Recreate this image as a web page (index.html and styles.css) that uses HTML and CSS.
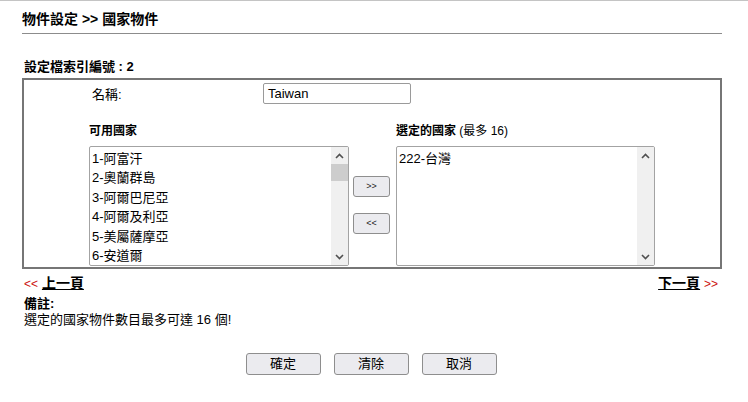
FILE: index.html
```html
<!DOCTYPE html>
<html lang="zh-Hant">
<head>
<meta charset="utf-8">
<title>國家物件</title>
<link rel="stylesheet" href="styles.css">
</head>
<body>
<div class="page">
  <div class="title">物件設定 &gt;&gt; 國家物件</div>
  <div class="index-label">設定檔索引編號 : 2</div>
  <div class="box">
    <div class="name-row">
      <span class="name-label">名稱:</span>
      <span class="text-input">Taiwan</span>
    </div>
    <div class="lists">
      <div class="heading">可用國家</div>
      <div></div>
      <div class="heading">選定的國家 <span class="normal">(最多 16)</span></div>
      <div class="listbox">
        <div class="items">
          <div>1-阿富汗</div>
          <div>2-奧蘭群島</div>
          <div>3-阿爾巴尼亞</div>
          <div>4-阿爾及利亞</div>
          <div>5-美屬薩摩亞</div>
          <div>6-安道爾</div>
        </div>
        <div class="sb">
          <div class="arrow"><svg width="9" height="6" viewBox="0 0 9 6"><polyline points="1,5 4.5,1.5 8,5" fill="none" stroke="#505050" stroke-width="1.6"/></svg></div>
          <div class="thumb"></div>
          <div class="track"></div>
          <div class="arrow"><svg width="9" height="6" viewBox="0 0 9 6"><polyline points="1,1 4.5,4.5 8,1" fill="none" stroke="#505050" stroke-width="1.6"/></svg></div>
        </div>
      </div>
      <div class="move-col">
        <span class="small-btn">&gt;&gt;</span>
        <span class="small-btn">&lt;&lt;</span>
      </div>
      <div class="listbox">
        <div class="items">
          <div>222-台灣</div>
        </div>
        <div class="sb">
          <div class="arrow"><svg width="9" height="6" viewBox="0 0 9 6"><polyline points="1,5 4.5,1.5 8,5" fill="none" stroke="#505050" stroke-width="1.6"/></svg></div>
          <div class="track"></div>
          <div class="arrow"><svg width="9" height="6" viewBox="0 0 9 6"><polyline points="1,1 4.5,4.5 8,1" fill="none" stroke="#505050" stroke-width="1.6"/></svg></div>
        </div>
      </div>
    </div>
  </div>
  <div class="nav">
    <span><span class="red">&lt;&lt;</span> <a class="nav-link">上一頁</a></span>
    <span><a class="nav-link">下一頁</a> <span class="red">&gt;&gt;</span></span>
  </div>
  <div class="note-label">備註:</div>
  <div class="note-text">選定的國家物件數目最多可達 16 個!</div>
  <div class="actions">
    <span class="btn">確定</span>
    <span class="btn">清除</span>
    <span class="btn">取消</span>
  </div>
</div>
</body>
</html>
```
FILE: styles.css
```css
html, body {
  margin: 0;
  padding: 0;
  background: #ffffff;
}
body {
  border-top: 1px solid #c4c4c4;
  font-family: "Liberation Sans", Arial, "Noto Sans CJK TC", sans-serif;
  font-size: 13px;
  color: #000;
}
.page {
  width: 700px;
  margin-left: 22px;
}
.title {
  font-size: 14px;
  font-weight: bold;
  line-height: 16px;
  padding-top: 10px;
  padding-bottom: 6px;
  border-bottom: 1px solid #8c8c8c;
}
.index-label {
  font-size: 13px;
  font-weight: bold;
  line-height: 16px;
  margin-top: 25px;
  margin-bottom: 3px;
  padding-left: 2px;
}
.box {
  box-sizing: border-box;
  width: 700px;
  border: 2px solid #767676;
  padding: 3px 0 1px 0;
}
.name-row {
  display: flex;
  align-items: center;
  height: 21px;
}
.name-label {
  width: 171px;
  padding-left: 68px;
}
.text-input {
  box-sizing: border-box;
  width: 148px;
  height: 21px;
  border: 1px solid #9a9a9a;
  border-radius: 2px;
  padding-left: 4px;
  line-height: 19px;
  font-size: 13px;
}
.lists {
  display: grid;
  grid-template-columns: 260px 47px 259px;
  margin-left: 65px;
}
.heading {
  font-size: 12px;
  font-weight: bold;
  line-height: 16px;
  margin-top: 19px;
  margin-bottom: 7px;
}
.heading .normal {
  font-weight: normal;
}
.listbox {
  box-sizing: border-box;
  height: 120px;
  border: 1px solid #a3a3a3;
  border-radius: 2px;
  display: flex;
  overflow: hidden;
}
.items {
  flex: 1;
  padding-top: 2px;
  padding-left: 2px;
  line-height: 19.4px;
  font-size: 13px;
  overflow: hidden;
}
.sb {
  width: 17px;
  background: #f0f0f0;
  display: flex;
  flex-direction: column;
}
.arrow {
  height: 17px;
  display: flex;
  align-items: center;
  justify-content: center;
}
.thumb {
  height: 17px;
  background: #cdcdcd;
}
.track {
  flex: 1;
}
.move-col {
  display: flex;
  flex-direction: column;
  align-items: flex-start;
  padding-left: 4px;
  padding-top: 30px;
  gap: 16px;
}
.small-btn {
  box-sizing: border-box;
  width: 37px;
  height: 21px;
  border: 1px solid #8e8e8e;
  border-radius: 3px;
  background: #ebebef;
  font-size: 9px;
  line-height: 19px;
  text-align: center;
  color: #222;
}
.nav {
  display: flex;
  justify-content: space-between;
  padding: 0 4px 0 2px;
  margin-top: 6px;
  line-height: 16px;
  font-size: 14px;
}
.red {
  color: #cc1111;
  font-size: 12px;
}
.nav-link {
  font-weight: bold;
  text-decoration: underline;
  color: #000;
}
.note-label {
  font-size: 13px;
  font-weight: bold;
  line-height: 16px;
  margin-top: 4px;
  padding-left: 2px;
}
.note-text {
  font-size: 13px;
  line-height: 16px;
  padding-left: 2px;
}
.actions {
  display: flex;
  justify-content: center;
  gap: 13px;
  margin-top: 25px;
  padding-right: 2px;
}
.btn {
  box-sizing: border-box;
  width: 75px;
  height: 22px;
  border: 1px solid #8e8e8e;
  border-radius: 3px;
  background: #ebebef;
  text-align: center;
  line-height: 20px;
  font-size: 13px;
}
```
